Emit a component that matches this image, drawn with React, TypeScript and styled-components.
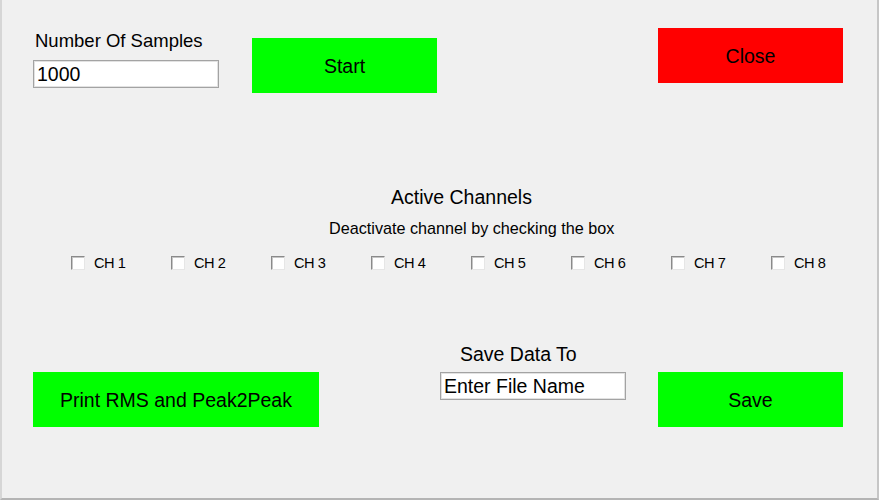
import React from "react";
import styled, { createGlobalStyle } from "styled-components";

const GlobalStyle = createGlobalStyle`
  html, body {
    margin: 0;
    padding: 0;
    background: #f0f0f0;
  }
  body {
    font-family: "Liberation Sans", Arial, sans-serif;
    color: #000;
  }
`;

const Frame = styled.div`
  box-sizing: border-box;
  width: 879px;
  height: 500px;
  background: #f0f0f0;
  border-left: 2px solid #d6d6d6;
  border-right: 2px solid #c6c6c6;
  border-bottom: 2px solid #b4b4b4;
  display: flex;
  flex-direction: column;
  overflow: hidden;
`;

const TopRow = styled.div`
  display: flex;
  align-items: flex-start;
  padding: 28px 34px 0 31px;
`;

const Field = styled.div<{ $top?: number; $left?: number }>`
  display: flex;
  flex-direction: column;
  align-items: flex-start;
  margin-top: ${(p) => p.$top ?? 0}px;
  margin-left: ${(p) => p.$left ?? 0}px;
`;

const FieldLabel = styled.div<{ $indent?: number; $gap: number; $size: number }>`
  font-size: ${(p) => p.$size}px;
  line-height: 20px;
  white-space: nowrap;
  padding-left: ${(p) => p.$indent ?? 0}px;
  margin-bottom: ${(p) => p.$gap}px;
`;

const Entry = styled.input`
  box-sizing: border-box;
  width: 186px;
  height: 28px;
  margin: 0;
  padding: 1px 3px 0;
  border: 1px solid #a3a3a3;
  box-shadow: inset 0 0 0 1px #e2e2e2;
  background: #fff;
  font-family: "Liberation Sans", Arial, sans-serif;
  font-size: 19.5px;
  color: #000;
  outline: none;
  &::placeholder {
    color: #000;
    opacity: 1;
  }
`;

const ActionButton = styled.button<{ $color: "green" | "red"; $w: number; $top?: number; $left?: number }>`
  box-sizing: border-box;
  width: ${(p) => p.$w}px;
  height: 55px;
  margin: ${(p) => p.$top ?? 0}px 0 0 ${(p) => p.$left ?? 0}px;
  padding: 2px 0 0;
  border: none;
  background: ${(p) => (p.$color === "green" ? "#00ff00" : "#ff0000")};
  font-family: "Liberation Sans", Arial, sans-serif;
  font-size: 19.5px;
  color: #000;
  display: flex;
  align-items: center;
  justify-content: center;
  flex-shrink: 0;
`;

const Spacer = styled.div`
  flex: 1;
`;

const ChannelsSection = styled.div`
  display: flex;
  flex-direction: column;
  align-items: flex-start;
  margin-top: 93px;
`;

const SectionTitle = styled.div`
  font-size: 19.5px;
  line-height: 22px;
  padding-left: 389px;
  white-space: nowrap;
`;

const SectionHint = styled.div`
  font-size: 16.2px;
  line-height: 18px;
  margin-top: 11px;
  padding-left: 327px;
  white-space: nowrap;
`;

const ChannelRow = styled.div`
  display: flex;
  margin-top: 18px;
  padding-left: 69px;
`;

const Channel = styled.label`
  width: 100px;
  display: flex;
  align-items: center;
  gap: 9px;
  height: 15px;
  font-size: 14.6px;
  letter-spacing: -0.5px;
  white-space: nowrap;
`;

const Box = styled.input`
  appearance: none;
  -webkit-appearance: none;
  box-sizing: border-box;
  width: 14px;
  height: 14px;
  margin: 0;
  background: #fff;
  border-style: solid;
  border-width: 1px;
  border-color: #8a8a8a #e6e6e6 #e6e6e6 #8a8a8a;
  box-shadow: inset 1px 1px 0 #c6c6c6;
  flex-shrink: 0;
`;

const BottomRow = styled.div`
  display: flex;
  align-items: flex-start;
  padding: 0 34px 0 31px;
  margin-top: 74px;
`;

const channels = [1, 2, 3, 4, 5, 6, 7, 8];

export default function App() {
  return (
    <>
      <GlobalStyle />
      <Frame>
        <TopRow>
          <Field $top={3}>
            <FieldLabel $gap={9} $indent={2} $size={18.5}>
              Number Of Samples
            </FieldLabel>
            <Entry defaultValue="1000" />
          </Field>
          <ActionButton $color="green" $w={185} $top={10} $left={33}>
            Start
          </ActionButton>
          <Spacer />
          <ActionButton $color="red" $w={185}>
            Close
          </ActionButton>
        </TopRow>

        <ChannelsSection>
          <SectionTitle>Active Channels</SectionTitle>
          <SectionHint>Deactivate channel by checking the box</SectionHint>
          <ChannelRow>
            {channels.map((n) => (
              <Channel key={n}>
                <Box type="checkbox" />
                {`CH ${n}`}
              </Channel>
            ))}
          </ChannelRow>
        </ChannelsSection>

        <BottomRow>
          <ActionButton $color="green" $w={286} $top={28}>
            Print RMS and Peak2Peak
          </ActionButton>
          <Field $left={121}>
            <FieldLabel $gap={8} $indent={20} $size={19.5}>
              Save Data To
            </FieldLabel>
            <Entry placeholder="Enter File Name" />
          </Field>
          <Spacer />
          <ActionButton $color="green" $w={185} $top={28}>
            Save
          </ActionButton>
        </BottomRow>
      </Frame>
    </>
  );
}
